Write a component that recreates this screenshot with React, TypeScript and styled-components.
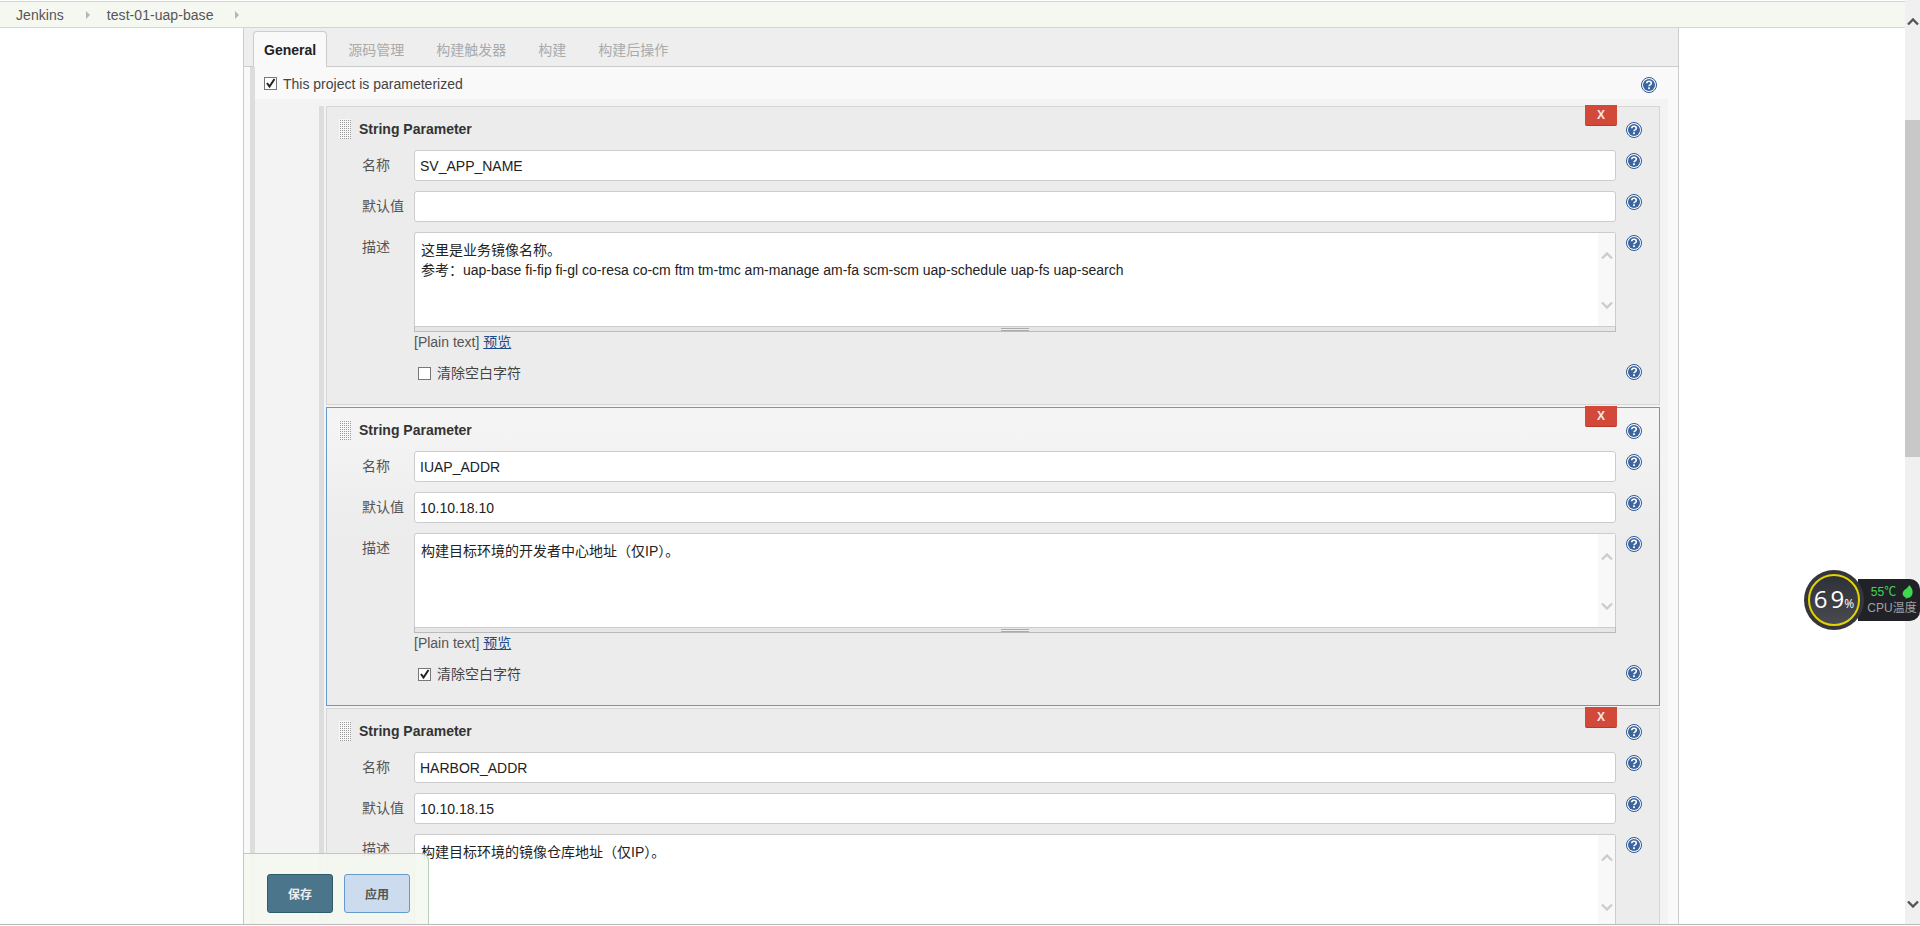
import React from "react";
import styled, { createGlobalStyle } from "styled-components";

const GlobalStyle = createGlobalStyle`
    html, body {
        margin: 0;
        padding: 0;
        background: #fff;
        overflow: hidden;
    }
    body {
        font-family: "Liberation Sans", "Noto Sans CJK SC", sans-serif;
        font-size: 14px;
        color: #333;
    }
`;

const Root = styled.div`
    position: relative;
    display: flex;
    height: 924px;
    overflow: hidden;
    border-bottom: 1px solid #bbb;
`;

const Page = styled.div`
    flex: 1;
    min-width: 0;
    padding-top: 1px;
`;

const TopBar = styled.div`
    display: flex;
    align-items: center;
    height: 25px;
    padding-left: 16px;
    background: #f5f8f1;
    border-top: 1px solid #d3d5d0;
    border-bottom: 1px solid #d3d5d0;
    color: #555;
    font-size: 14px;
`;

const Crumb = styled.span`
    letter-spacing: 0.05px;
`;

const CrumbArrow = styled.span`
    width: 0;
    height: 0;
    margin: 0 17px 0 22px;
    border-left: 4px solid #b5b5b5;
    border-top: 4px solid transparent;
    border-bottom: 4px solid transparent;
`;

const Track = styled.div`
    display: flex;
    flex-direction: column;
    align-items: center;
    width: 15px;
    padding: 18px 0 16px;
    box-sizing: border-box;
    background: #f0f0f0;
`;

const Thumb = styled.div`
    align-self: stretch;
    height: 337px;
    margin-top: 94px;
    background: #c8c8c8;
`;

const TrackArrowDown = styled.div`
    margin-top: auto;
    line-height: 0;
`;

const Panel = styled.div`
    width: 1435px;
    margin-left: 243px;
    border-left: 1px solid #ccc;
`;

const TabBar = styled.div`
    display: flex;
    align-items: flex-end;
    gap: 10px;
    height: 38px;
    padding-left: 9px;
    background: #eee;
    border-right: 1px solid #ccc;
    border-bottom: 1px solid #ccc;
`;

const Tab = styled.div<{ $active?: boolean }>`
    display: flex;
    align-items: center;
    height: 35px;
    padding: 0 ${(p) => (p.$active ? 10 : 11)}px;
    box-sizing: border-box;
    font-size: 14px;
    font-weight: ${(p) => (p.$active ? 700 : 400)};
    color: ${(p) => (p.$active ? "#222" : "#aaa")};
    ${(p) =>
        p.$active &&
        `
        height: 36px;
        margin-bottom: -1px;
        background: #f9f9f9;
        border: 1px solid #ccc;
        border-bottom: none;
        border-radius: 4px 4px 0 0;
    `}
`;

const Body = styled.div`
    padding-left: 6px;
    background: #f9f9f9;
    border-right: 1px solid #ccc;
`;

const BodyInner = styled.div`
    border-left: 5px solid #ddd;
`;

const ProjectRow = styled.div`
    display: flex;
    align-items: center;
    height: 32px;
    padding: 0 21px 0 9px;
`;

const ProjectLabel = styled.span`
    flex: 1;
    margin: 2px 0 0 6px;
    color: #444;
    font-size: 14px;
`;

const Section = styled.div`
    margin-right: 10px;
    padding: 7px 8px 0 64px;
    background: #f3f3f3;
`;

const SectionInner = styled.div`
    padding-left: 2px;
    border-left: 5px solid #ddd;
`;

const Block = styled.div<{ $focused?: boolean }>`
    position: relative;
    margin-bottom: 2px;
    padding-bottom: 22px;
    border: 1px solid ${(p) => (p.$focused ? "#6699cc" : "#d6d6d6")};
    background: ${(p) =>
        p.$focused ? "linear-gradient(#f5f5f5, #ececec 130px)" : "#ececec"};
`;

const RemoveButton = styled.div`
    position: absolute;
    top: -2px;
    right: 42px;
    display: flex;
    align-items: center;
    justify-content: center;
    width: 32px;
    height: 20px;
    background: #d24939;
    border-bottom: 1px solid #b8382a;
    border-radius: 0 0 2px 2px;
    color: #f5e8e6;
    font-size: 12px;
    font-weight: 700;
`;

const BlockHead = styled.div`
    display: flex;
    align-items: center;
    height: 43px;
    padding: 0 17px 0 12px;
`;

const Grip = styled.div`
    width: 12px;
    height: 20px;
    background-image: linear-gradient(90deg, #f8f8f8 1px, transparent 1px),
        linear-gradient(#f8f8f8 1px, #999 1px);
    background-size: 2px 2px;
`;

const BlockTitle = styled.div`
    flex: 1;
    margin-left: 8px;
    color: #333;
    font-size: 14px;
    font-weight: 700;
`;

const HeadHelp = styled.div`
    margin-top: 3px;
    line-height: 0;
`;

const FieldRow = styled.div<{ $last?: boolean }>`
    display: flex;
    align-items: flex-start;
    padding: 0 17px ${(p) => (p.$last ? 0 : 10)}px 35px;
`;

const FieldLabel = styled.div`
    flex: none;
    width: 52px;
    color: #555;
    font-size: 14px;
    line-height: 30px;
`;

const FieldMain = styled.div`
    flex: 1;
    min-width: 0;
`;

const TextInput = styled.div`
    height: 31px;
    padding: 0 5px;
    box-sizing: border-box;
    background: #fff;
    border: 1px solid #ccc;
    border-radius: 3px;
    color: #222;
    font-size: 14px;
    line-height: 31px;
`;

const TextArea = styled.div`
    display: flex;
    height: 94px;
    background: #fff;
    border: 1px solid #ccc;
    border-bottom: none;
    border-radius: 3px 3px 0 0;
    box-sizing: border-box;
`;

const TextAreaContent = styled.div`
    flex: 1;
    padding: 7px 6px;
    color: #222;
    font-size: 14px;
    line-height: 20px;
`;

const TextAreaLine = styled.div`
    white-space: pre;
`;

const TextAreaScroll = styled.div`
    display: flex;
    flex-direction: column;
    align-items: center;
    justify-content: space-between;
    width: 17px;
    padding: 19px 0 17px;
    box-sizing: border-box;
    background: #f8f8f8;
`;

const Grippie = styled.div`
    display: flex;
    justify-content: center;
    height: 4px;
    background: #e6e6e6;
    border: 1px solid #bbb;
    border-top-color: #ccc;
`;

const GrippieHandle = styled.div`
    width: 28px;
    height: 3px;
    margin-top: 1px;
    background: repeating-linear-gradient(#aaa 0 1px, #eee 1px 2px);
`;

const PreviewLine = styled.div`
    height: 21px;
    color: #555;
    font-size: 14px;
    line-height: 21px;
`;

const PreviewLink = styled.a`
    color: #204a87;
    text-decoration: underline;
`;

const FieldHelp = styled.div`
    flex: none;
    margin: 3px 0 0 10px;
    line-height: 0;
`;

const OptionRow = styled.div`
    display: flex;
    align-items: center;
    height: 21px;
    margin-top: 8px;
    padding: 0 17px 0 91px;
`;

const OptionLabel = styled.span`
    flex: 1;
    margin-left: 6px;
    color: #444;
    font-size: 14px;
`;

const Box = styled.div<{ $drop?: number }>`
    flex: none;
    width: 13px;
    height: 13px;
    margin-top: ${(p) => p.$drop ?? 0}px;
    box-sizing: border-box;
    background: #fff;
    border: 1px solid #777;
    line-height: 0;
`;

const Footer = styled.div`
    position: absolute;
    left: 243px;
    bottom: 0;
    display: flex;
    gap: 11px;
    width: 186px;
    height: 71px;
    padding: 20px 0 0 23px;
    box-sizing: border-box;
    background: rgba(244, 248, 240, 0.9);
    border: 1px solid #b4d0b9;
    border-bottom: none;
    border-radius: 0 8px 0 0;
`;

const FooterButton = styled.div<{ $primary?: boolean }>`
    display: flex;
    align-items: center;
    justify-content: center;
    width: 66px;
    height: 39px;
    box-sizing: border-box;
    background: ${(p) => (p.$primary ? "#4b758b" : "#ccdcee")};
    border: 1px solid ${(p) => (p.$primary ? "#2e5a6e" : "#6699cc")};
    border-radius: 3px;
    color: ${(p) => (p.$primary ? "#eee" : "#555")};
    font-size: 12px;
    font-weight: 700;
`;

const Widget = styled.div`
    position: absolute;
    top: 570px;
    right: 0;
    display: flex;
    align-items: center;
    width: 116px;
    height: 60px;
`;

const Dial = styled.div`
    position: relative;
    z-index: 1;
    display: flex;
    align-items: center;
    justify-content: center;
    width: 60px;
    height: 60px;
    box-sizing: border-box;
    background: #34363c;
    border-radius: 50%;
`;

const DialFace = styled.div`
    display: flex;
    align-items: baseline;
    justify-content: center;
    width: 52px;
    height: 52px;
    box-sizing: border-box;
    background: linear-gradient(#2f3138, #484a50);
    border: 2px solid #e2d400;
    border-radius: 50%;
    color: #fff;
    font-family: "Open Sans", "Liberation Sans", sans-serif;
    font-size: 24px;
    font-weight: 400;
    letter-spacing: 3px;
    line-height: 46px;
`;

const DialUnit = styled.span`
    margin-left: -3px;
    font-size: 12px;
    letter-spacing: 0;
`;

const WidgetInfo = styled.div`
    flex: 1;
    display: flex;
    flex-direction: column;
    align-items: center;
    justify-content: center;
    height: 42px;
    margin-left: -6px;
    padding-left: 6px;
    background: #202228;
    border-radius: 0 10px 10px 0;
`;

const WidgetTemp = styled.div`
    display: flex;
    align-items: center;
    gap: 6px;
    color: #3fd94f;
    font-size: 12px;
    line-height: 16px;
`;

const WidgetName = styled.div`
    color: #a0a0a0;
    font-size: 12px;
    line-height: 16px;
`;

function HelpIcon() {
    return (
        <svg width="16" height="16" viewBox="0 0 16 16">
            <circle cx="8" cy="8" r="7.5" fill="#fff" stroke="#2a5794" />
            <circle cx="8" cy="8" r="6" fill="#3a659f" />
            <path
                d="M5.7 6.3C5.7 4.9 6.8 4.2 8 4.2s2.3.8 2.3 2c0 1.6-2.3 1.6-2.3 3.1"
                fill="none"
                stroke="#fff"
                strokeWidth="1.6"
            />
            <rect x="7.1" y="10.3" width="1.8" height="1.8" fill="#fff" />
        </svg>
    );
}

function Chevron({ down, color = "#ccc", size = 12 }: { down?: boolean; color?: string; size?: number }) {
    return (
        <svg width={size} height={(size * 2) / 3} viewBox="0 0 12 8">
            <polyline
                points={down ? "1,1.5 6,6.5 11,1.5" : "1,6.5 6,1.5 11,6.5"}
                fill="none"
                stroke={color}
                strokeWidth="2.4"
            />
        </svg>
    );
}

function CheckBox({ checked, drop }: { checked?: boolean; drop?: number }) {
    return (
        <Box $drop={drop}>
            {checked && (
                <svg width="11" height="11" viewBox="0 0 11 11">
                    <polyline
                        points="2,5 4.5,8.5 9.5,1"
                        fill="none"
                        stroke="#222"
                        strokeWidth="2"
                    />
                </svg>
            )}
        </Box>
    );
}

type TParam = {
    name: string;
    value: string;
    lines: string[];
    trim?: boolean;
    focused?: boolean;
    belowFold?: boolean;
};

const params: TParam[] = [
    {
        name: "SV_APP_NAME",
        value: "",
        lines: [
            "这里是业务镜像名称。",
            "参考：uap-base fi-fip fi-gl co-resa co-cm ftm tm-tmc am-manage am-fa scm-scm uap-schedule uap-fs uap-search",
        ],
    },
    {
        name: "IUAP_ADDR",
        value: "10.10.18.10",
        lines: ["构建目标环境的开发者中心地址（仅IP）。"],
        trim: true,
        focused: true,
    },
    {
        // its preview line and checkbox lie under the bottom of the window
        name: "HARBOR_ADDR",
        value: "10.10.18.15",
        lines: ["构建目标环境的镜像仓库地址（仅IP）。"],
        belowFold: true,
    },
];

function ParamBlock({ param }: { param: TParam }) {
    return (
        <Block $focused={param.focused}>
            <RemoveButton>X</RemoveButton>
            <BlockHead>
                <Grip />
                <BlockTitle>String Parameter</BlockTitle>
                <HeadHelp>
                    <HelpIcon />
                </HeadHelp>
            </BlockHead>
            <FieldRow>
                <FieldLabel>名称</FieldLabel>
                <FieldMain>
                    <TextInput>{param.name}</TextInput>
                </FieldMain>
                <FieldHelp>
                    <HelpIcon />
                </FieldHelp>
            </FieldRow>
            <FieldRow>
                <FieldLabel>默认值</FieldLabel>
                <FieldMain>
                    <TextInput>{param.value}</TextInput>
                </FieldMain>
                <FieldHelp>
                    <HelpIcon />
                </FieldHelp>
            </FieldRow>
            <FieldRow $last>
                <FieldLabel>描述</FieldLabel>
                <FieldMain>
                    <TextArea>
                        <TextAreaContent>
                            {param.lines.map((line) => (
                                <TextAreaLine key={line}>{line}</TextAreaLine>
                            ))}
                        </TextAreaContent>
                        <TextAreaScroll>
                            <Chevron />
                            <Chevron down />
                        </TextAreaScroll>
                    </TextArea>
                    <Grippie>
                        <GrippieHandle />
                    </Grippie>
                    {!param.belowFold && (
                        <PreviewLine>
                            [Plain text] <PreviewLink>预览</PreviewLink>
                        </PreviewLine>
                    )}
                </FieldMain>
                <FieldHelp>
                    <HelpIcon />
                </FieldHelp>
            </FieldRow>
            {!param.belowFold && (
                <OptionRow>
                    <CheckBox checked={param.trim} drop={3} />
                    <OptionLabel>清除空白字符</OptionLabel>
                    <HelpIcon />
                </OptionRow>
            )}
        </Block>
    );
}

export default function App() {
    return (
        <Root>
            <GlobalStyle />
            <Page>
                <TopBar>
                    <Crumb>Jenkins</Crumb>
                    <CrumbArrow />
                    <Crumb>test-01-uap-base</Crumb>
                    <CrumbArrow />
                </TopBar>
                <Panel>
                    <TabBar>
                        <Tab $active>General</Tab>
                        <Tab>源码管理</Tab>
                        <Tab>构建触发器</Tab>
                        <Tab>构建</Tab>
                        <Tab>构建后操作</Tab>
                    </TabBar>
                    <Body>
                        <BodyInner>
                            <ProjectRow>
                                <CheckBox checked />
                                <ProjectLabel>This project is parameterized</ProjectLabel>
                                <HeadHelp>
                                    <HelpIcon />
                                </HeadHelp>
                            </ProjectRow>
                            <Section>
                                <SectionInner>
                                    {params.map((param) => (
                                        <ParamBlock key={param.name} param={param} />
                                    ))}
                                </SectionInner>
                            </Section>
                        </BodyInner>
                    </Body>
                </Panel>
            </Page>
            <Track>
                <Chevron color="#555" />
                <Thumb />
                <TrackArrowDown>
                    <Chevron down color="#555" />
                </TrackArrowDown>
            </Track>
            <Footer>
                <FooterButton $primary>保存</FooterButton>
                <FooterButton>应用</FooterButton>
            </Footer>
            <Widget>
                <Dial>
                    <DialFace>
                        69<DialUnit>%</DialUnit>
                    </DialFace>
                </Dial>
                <WidgetInfo>
                    <WidgetTemp>
                        55℃
                        <svg width="11" height="14" viewBox="0 0 11 14">
                            <path d="M7 0C10 3 11 5 10.5 8.5 10 11.5 7.5 13 5 13L3.5 14 3.8 12.6C1 11.5 0 9.5 1 7 2 4.5 6 3.5 7 0z" fill="#3fd94f" />
                        </svg>
                    </WidgetTemp>
                    <WidgetName>CPU温度</WidgetName>
                </WidgetInfo>
            </Widget>
        </Root>
    );
}
